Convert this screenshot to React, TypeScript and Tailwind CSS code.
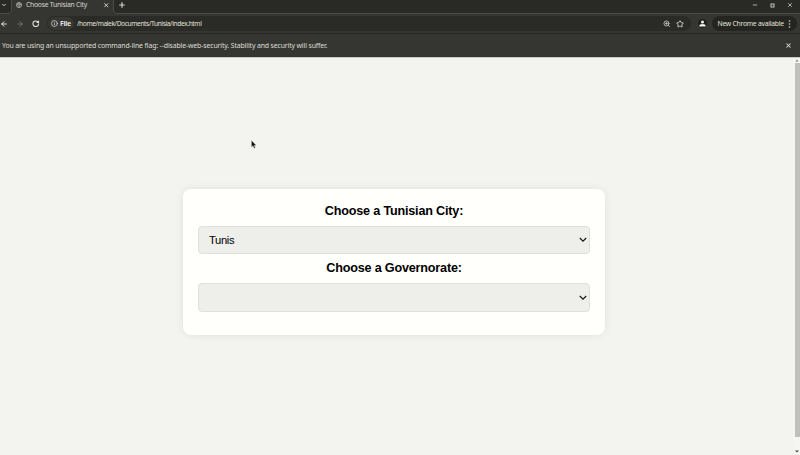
import React from 'react';
import { ArrowLeft, ArrowRight, ChevronDown, Info, Minus, Plus, RotateCw, Star, X, ZoomIn } from 'lucide-react';

function TabStrip() {
  return (
    <div className="flex h-[14px] shrink-0 bg-[#292a25]">
      <div className="flex w-[12px] items-center justify-start rounded-br-[4px] border-r border-b border-[#4a4b46] pb-[3px] text-[#deded9]">
        <ChevronDown size={6} strokeWidth={3.5} className="ml-px" />
      </div>
      <div className="flex w-[101px] items-center bg-[#353631] pb-[4px] pl-[4px] text-[#d8d8d2]">
        <svg width="6" height="6" viewBox="0 0 12 12" className="shrink-0">
          <circle cx="6" cy="6" r="5" fill="none" stroke="#bdbdb8" strokeWidth="1.7" />
          <path d="M2 3.5 5 6l1.5 1L6 10M6 1.5 5.5 4 8 5l2.5-.5" fill="none" stroke="#bdbdb8" strokeWidth="1.8" />
        </svg>
        <span className="ml-[4px] w-[77px] text-[6.8px] leading-[8px] tracking-[-0.25px] whitespace-nowrap">Choose Tunisian City</span>
        <X size={6.5} strokeWidth={3.5} className="shrink-0" />
      </div>
      <div className="flex flex-1 items-center justify-between rounded-bl-[4px] border-b border-l border-[#4a4b46] pr-[7px] pb-[3px] pl-[4px] text-[#d5d5cf]">
        <Plus size={8} strokeWidth={3.5} />
        <div className="flex items-center gap-[12px]">
          <Minus size={6} strokeWidth={3} />
          <svg width="5" height="5" viewBox="0 0 5 5"><rect x="1" y="1" width="3" height="3" fill="none" stroke="#c5c5bf" /></svg>
          <X size={6} strokeWidth={3} />
        </div>
      </div>
    </div>
  );
}

function Toolbar() {
  return (
    <div className="flex h-[20px] shrink-0 items-center border-b border-[#252620] bg-[#353631] text-[#e2e2dc]">
      <ArrowLeft size={8} strokeWidth={3} />
      <ArrowRight size={8} strokeWidth={2.5} className="ml-[8px] text-[#7b7c76]" />
      <RotateCw size={7.5} strokeWidth={3.5} className="ml-[8px]" />
      <div className="ml-[7.5px] flex h-[15px] w-[644px] items-center rounded-full bg-[#2a2b26] pr-[7px] pl-px">
        <div className="flex h-[13px] w-[26px] items-center justify-center gap-[2px] rounded-full bg-[#373833]">
          <Info size={7} strokeWidth={2.5} />
          <span className="text-[6.8px] leading-[8px] font-bold tracking-[-0.25px]">File</span>
        </div>
        <span className="ml-[3px] flex-1 text-[6.6px] leading-[8px] tracking-[-0.37px] whitespace-nowrap">/home/malek/Documents/Tunisia/index.html</span>
        <ZoomIn size={7.5} strokeWidth={2.8} className="text-[#c3c4be]" />
        <Star size={8} strokeWidth={2.8} className="ml-[6px] text-[#d0d1cb]" />
      </div>
      <div className="ml-[6.5px] flex h-[9px] w-[9px] items-center justify-center rounded-full bg-[#20211d]">
        <svg width="7" height="7" viewBox="0 0 14 14" fill="#f3f3ed"><circle cx="7" cy="4" r="3" /><path d="M1 13v-2q0-3 6-3t6 3v2z" /></svg>
      </div>
      <div className="ml-[5px] flex h-[15px] w-[85px] items-center rounded-full bg-[#242520] pl-[6px]">
        <span className="w-[70px] text-[6.8px] leading-[8px] tracking-[-0.25px] whitespace-nowrap">New Chrome available</span>
        <svg width="3" height="8" viewBox="0 0 3 8" fill="#d7d7d1"><circle cx="1.5" cy="1" r=".8" /><circle cx="1.5" cy="4" r=".8" /><circle cx="1.5" cy="7" r=".8" /></svg>
      </div>
    </div>
  );
}

function Field({ label, value }: { label: string; value: string }) {
  return (
    <div className="flex flex-col">
      <div className="h-[22.8px] text-center text-[12.6px] leading-[16.4px] font-bold tracking-[-0.18px] text-black">{label}</div>
      <button className="flex h-[28.5px] w-full items-center justify-between rounded-[4px] border border-[#dfe0dc] bg-[#eeeeeb] pr-[2px] pl-[10px] text-[11.2px] leading-[14px] tracking-[-0.35px] text-black">
        <span>{value}</span>
        <svg width="8" height="6" viewBox="0 0 8 6"><path d="m.8 1 3.2 3.2L7.2 1" fill="none" stroke="#111" strokeWidth="1.1" /></svg>
      </button>
    </div>
  );
}

export default function App() {
  return (
    <div className="relative flex h-[455px] w-[800px] flex-col overflow-hidden bg-[#f3f3f0] font-['Noto_Sans',sans-serif]">
      <TabStrip />
      <Toolbar />
      <div className="flex h-[23px] shrink-0 items-center justify-between bg-[#353631] pr-[8px] pl-[2px] text-[#deded8]">
        <span className="text-[6.9px] leading-[9px] tracking-[-0.13px] whitespace-nowrap">You are using an unsupported command-line flag: --disable-web-security. Stability and security will suffer.</span>
        <X size={7} strokeWidth={3.5} />
      </div>
      <div className="flex flex-1 border-t border-[#c9c9c5]">
        <main className="flex flex-1 items-start justify-center pt-[131px] pr-[6px] font-['Liberation_Sans',Arial,sans-serif]">
          <section className="flex h-[146px] w-[422px] flex-col gap-[6px] rounded-[8px] bg-[#fffffc] px-[15px] pt-[14.2px] shadow-[0_0_8px_rgba(0,0,0,0.08)]">
            <Field label="Choose a Tunisian City:" value="Tunis" />
            <Field label="Choose a Governorate:" value="" />
          </section>
        </main>
        <div className="flex w-[6px] flex-col items-center bg-[#f5f5f2]">
          <svg width="6" height="5" viewBox="0 0 6 5"><path d="m1.5 3.5 1.5-2 1.5 2z" fill="#777" /></svg>
          <div className="h-[374px] w-[5px] bg-[#bfbfbd]" />
          <svg width="6" height="5" viewBox="0 0 6 5" className="mt-auto mb-[1px]"><path d="m1 1.5 2 2 2-2z" fill="#444" /></svg>
        </div>
      </div>
      <svg width="6" height="9" viewBox="0 0 6 9" className="absolute top-[140px] left-[251px]">
        <path d="M.5.5v6.5L2 5.7 3.2 8.3l1-.5L3.1 5.3h2z" fill="#111" stroke="#bbb" strokeWidth=".4" />
      </svg>
    </div>
  );
}
